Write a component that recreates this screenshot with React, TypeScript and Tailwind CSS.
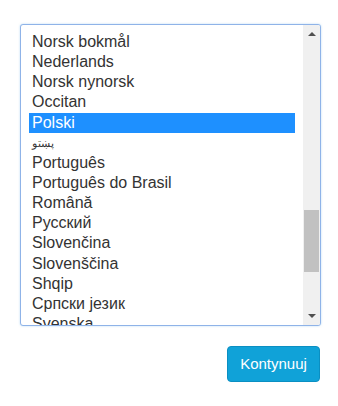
const languages = [
  "Norsk bokmål",
  "Nederlands",
  "Norsk nynorsk",
  "Occitan",
  "Polski",
  "پښتو",
  "Português",
  "Português do Brasil",
  "Română",
  "Русский",
  "Slovenčina",
  "Slovenščina",
  "Shqip",
  "Српски језик",
  "Svenska",
];

const selected = "Polski";

export default function App() {
  return (
    <div
      className="h-[406px] w-[338px] bg-white"
      style={{ fontFamily: '"Liberation Sans", Arial, sans-serif' }}
    >
      <div className="pl-5 pr-[17px] pt-6">
        <div className="flex h-[302px] overflow-hidden rounded-[3px] border border-[#8fb3e8] bg-white shadow-[0_0_2px_rgba(102,175,233,0.5)]">
          <ul className="flex-1 overflow-hidden pl-2 pr-2 pt-[7px]">
            {languages.map((lang) => (
              <li
                key={lang}
                className={
                  lang === selected
                    ? "h-[20.15px] bg-[#1e90ff] pl-[3px] text-[16px] leading-[20px] text-white"
                    : lang === "پښتو"
                      ? "h-[20.15px] pl-[3px] text-[11px] leading-[20px] text-[#333]"
                      : "h-[20.15px] pl-[3px] text-[16px] leading-[20px] text-[#333]"
                }
              >
                {lang}
              </li>
            ))}
          </ul>
          <div className="flex w-[17px] flex-col bg-[#f0f0f0]">
            <div className="flex h-[17px] items-center justify-center">
              <svg width="8" height="5" viewBox="0 0 8 5">
                <path d="M0 5 L4 1 L8 5 Z" fill="#505050" />
              </svg>
            </div>
            <div className="flex-1 px-[1px] pt-[168px]">
              <div className="h-[62px] bg-[#c1c1c1]" />
            </div>
            <div className="flex h-[17px] items-center justify-center">
              <svg width="8" height="5" viewBox="0 0 8 5">
                <path d="M0 0 L4 4 L8 0 Z" fill="#505050" />
              </svg>
            </div>
          </div>
        </div>
        <div className="flex justify-end pr-[1px] pt-[20px]">
          <button className="h-[36px] w-[93px] rounded-[4px] border border-[#0b8fc2] bg-[#10a2d8] text-[15px] text-white">
            Kontynuuj
          </button>
        </div>
      </div>
    </div>
  );
}
